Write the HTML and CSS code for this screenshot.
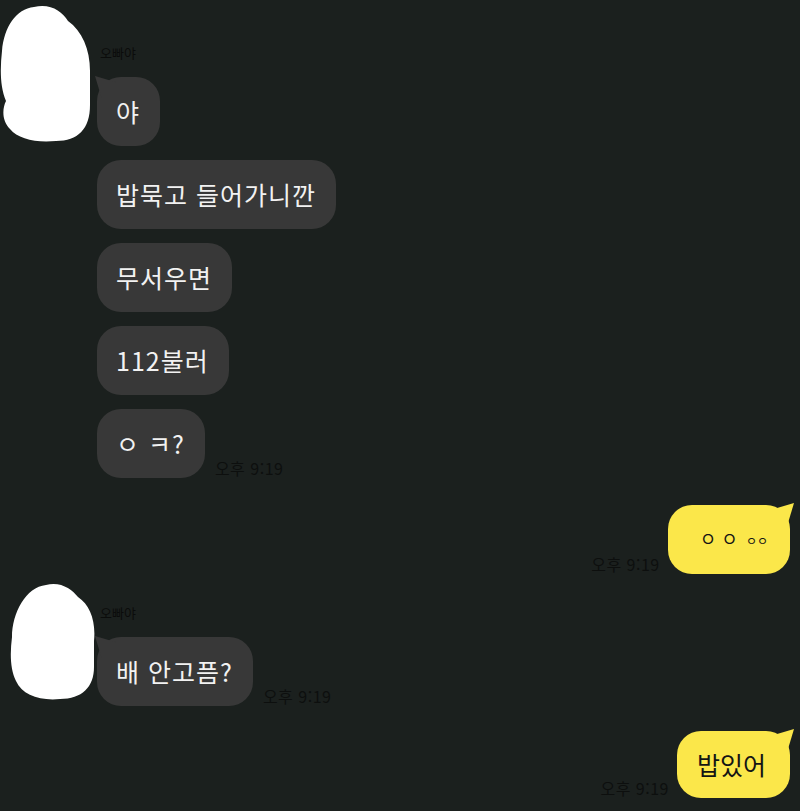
FILE: index.html
```html
<!DOCTYPE html>
<html lang="ko">
<head>
  <meta charset="UTF-8" />
  <meta name="viewport" content="width=device-width, initial-scale=1.0"/>
  <title>채팅</title>
  <link rel="stylesheet" href="styles.css">
</head>
<body>
  <div class="chat">
    <div class="group group-first">
      <div class="avatar">
        <svg width="92" height="140" viewBox="0 0 92 140">
          <path d="M34 2 C50 -2 62 6 68 16 C82 26 90 44 90 66 L90 100 C90 124 78 136 56 136 C36 138 18 134 10 124 C2 116 2 104 6 96 C0 82 0 64 2 46 C4 22 16 4 34 2 Z" fill="#fff"/>
        </svg>
      </div>
      <div class="messages">
        <div class="name">오빠야</div>
        <div class="bubble tail">야</div>
        <div class="bubble">밥묵고 들어가니깐</div>
        <div class="bubble">무서우면</div>
        <div class="bubble">112불러</div>
        <div class="line">
          <div class="bubble">ㅇ ㅋ?</div>
          <span class="time">오후 9:19</span>
        </div>
      </div>
    </div>

    <div class="mine mine-first">
      <span class="time">오후 9:19</span>
      <div class="bubble yellow">ㅇ ㅇ<span class="small">ㅇㅇ</span></div>
    </div>

    <div class="group group-second">
      <div class="avatar avatar-second">
        <svg width="86" height="118" viewBox="0 0 86 118">
          <path d="M36 2 C50 -2 62 6 68 14 C80 22 86 38 84 58 L84 84 C84 104 72 116 50 116 C30 118 12 112 6 98 C0 86 0 70 2 54 C2 30 16 4 36 2 Z" fill="#fff"/>
        </svg>
      </div>
      <div class="messages">
        <div class="name">오빠야</div>
        <div class="line">
          <div class="bubble tail">배 안고픔?</div>
          <span class="time">오후 9:19</span>
        </div>
      </div>
    </div>

    <div class="mine mine-second">
      <span class="time">오후 9:19</span>
      <div class="bubble yellow">밥있어</div>
    </div>
  </div>
</body>
</html>
```

FILE: styles.css
```css
body {
  margin: 0;
  background-color: #1b201e;
  font-family: "Noto Sans CJK KR", "Noto Sans", sans-serif;
  height: 811px;
  overflow: hidden;
}
.chat {
  display: flex;
  flex-direction: column;
  padding-right: 10px;
}
.group {
  display: flex;
}
.group-first {
  padding-top: 5px;
}
.group-second {
  margin-top: 9px;
}
.avatar {
  width: 97px;
  flex-shrink: 0;
}
.avatar-second {
  padding-left: 10px;
  width: 87px;
}
.messages {
  display: flex;
  flex-direction: column;
  align-items: flex-start;
  gap: 14px;
}
.name {
  margin-top: 39px;
  margin-bottom: 1px;
  margin-left: 3px;
  font-size: 13px;
  line-height: 18px;
  color: #0b0c0b;
}
.group-second .name {
  margin-top: 21px;
}
.line {
  display: flex;
  align-items: flex-end;
  gap: 10px;
}
.bubble {
  position: relative;
  background-color: #383838;
  color: #f2f2f2;
  font-size: 25px;
  line-height: 31px;
  letter-spacing: 1px;
  padding: 19px 20px 19px 19px;
  border-radius: 24px;
  white-space: nowrap;
}
.tail::before {
  content: "";
  position: absolute;
  left: -2px;
  top: -1px;
  width: 22px;
  height: 22px;
  background-color: #383838;
  clip-path: polygon(0 0, 100% 30%, 100% 100%, 30% 100%);
}
.time {
  font-size: 16px;
  line-height: 18px;
  letter-spacing: 0.5px;
  color: #0d0f0e;
  margin-bottom: 1px;
}
.mine {
  display: flex;
  justify-content: flex-end;
  align-items: flex-end;
  gap: 8px;
}
.mine .time {
  margin-bottom: 1px;
}
.mine-first {
  margin-top: 27px;
}
.mine-second {
  margin-top: 25px;
}
.yellow {
  background-color: #fbe74a;
  color: #141414;
  letter-spacing: 0;
  padding: 18px 24px 18px 20px;
}
.yellow::after {
  content: "";
  position: absolute;
  right: -4px;
  top: -2px;
  width: 22px;
  height: 22px;
  background-color: #fbe74a;
  clip-path: polygon(100% 0, 70% 100%, 0 100%, 0 30%);
}
.mine-first .yellow {
  padding-left: 32px;
  padding-right: 22px;
  font-size: 18px;
}
.small {
  font-size: 12px;
  margin-left: 8px;
}
```
